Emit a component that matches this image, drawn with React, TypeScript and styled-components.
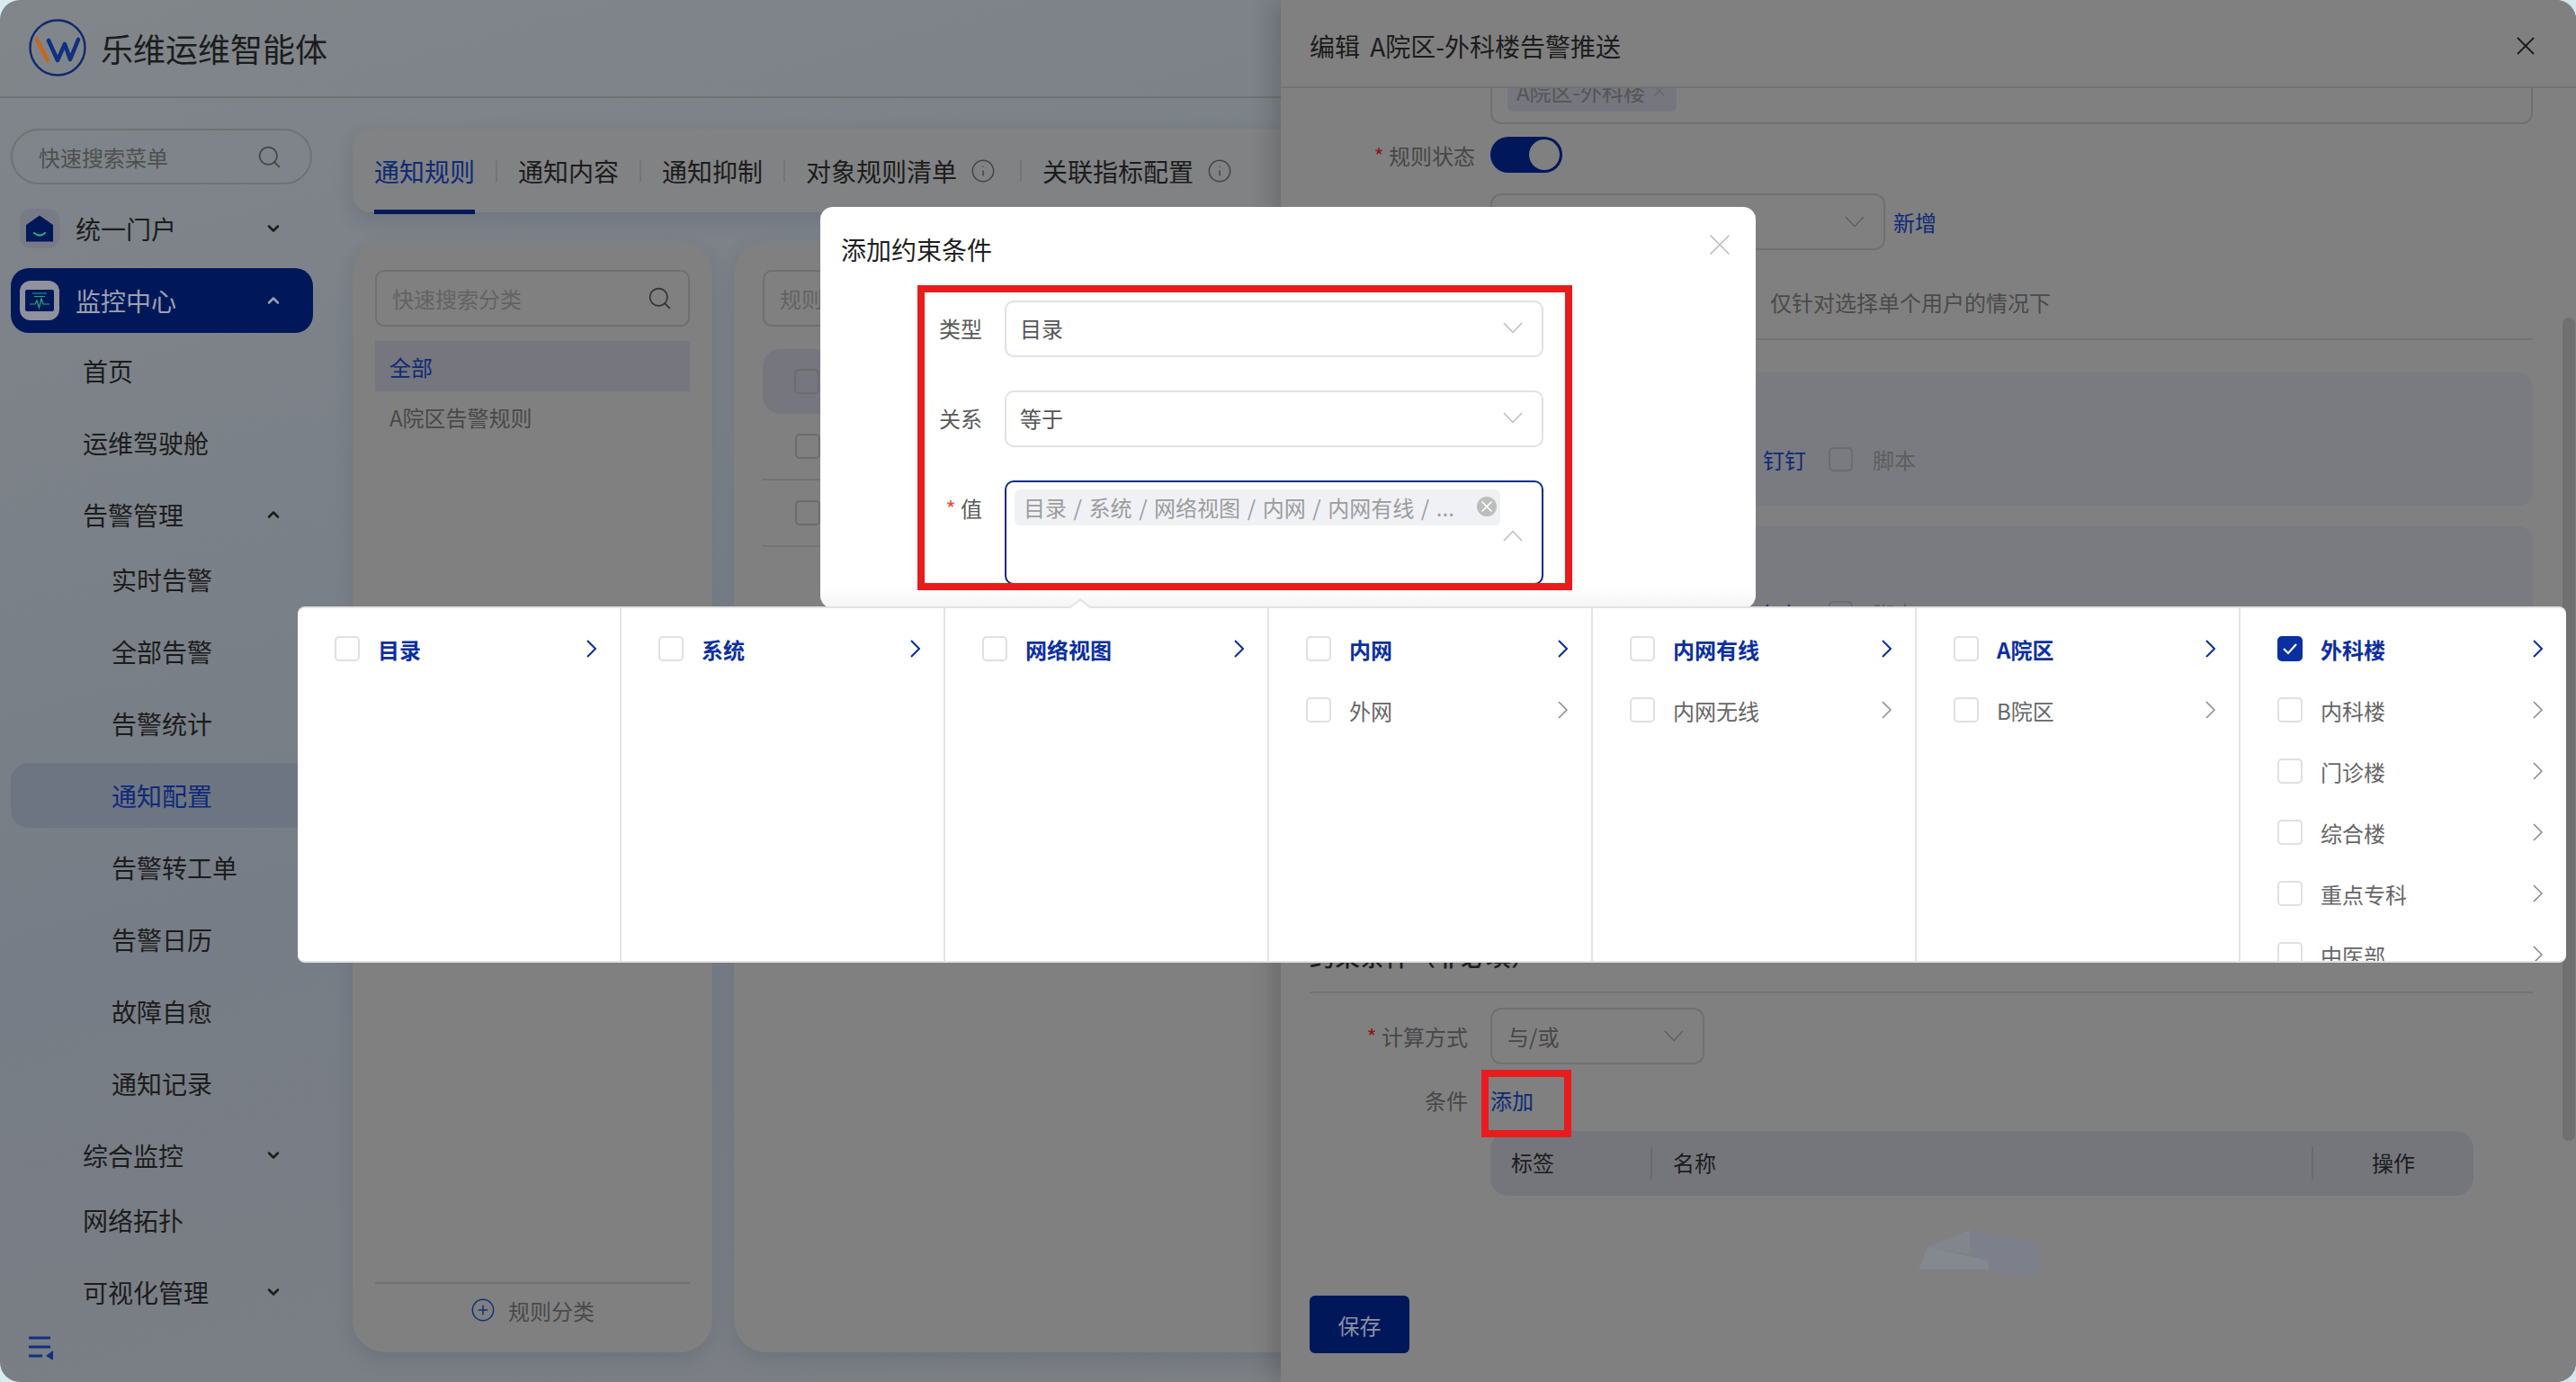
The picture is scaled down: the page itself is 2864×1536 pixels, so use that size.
import React from 'react';
import styled, { createGlobalStyle } from 'styled-components';
import { Search, Info, CirclePlus, X, ChevronDown, ChevronUp } from 'lucide-react';

const GlobalStyle = createGlobalStyle`
  html, body {
    margin: 0;
    padding: 0;
    background: #d9edf0;
  }
  * {
    box-sizing: border-box;
  }
  body {
    font-family: "Noto Sans CJK SC", "Noto Sans", sans-serif;
  }
`;

const Stage = styled.div`
  position: relative;
  width: 2864px;
  height: 1536px;
  overflow: hidden;
  background: #d9edf0;
`;

const Shell = styled.div`
  display: flex;
  flex-direction: column;
  height: 100%;
  border-radius: 22px;
  overflow: hidden;
  background: linear-gradient(165deg, #80868a 0%, #777d86 48%, #7e8083 100%);
`;

const TopBar = styled.header`
  display: flex;
  align-items: center;
  gap: 16px;
  flex: 0 0 109px;
  padding: 0 0 2px 32px;
  border-bottom: 2px solid #6f7375;
`;

const BrandName = styled.div`
  font-size: 36px;
  line-height: 50px;
  color: #1c1c1c;
`;

const Body = styled.div`
  display: flex;
  flex: 1;
  min-height: 0;
`;

const Sidebar = styled.aside`
  flex: 0 0 392px;
  padding: 34px 0 0 12px;
  position: relative;
`;

const MenuSearch = styled.div`
  display: flex;
  align-items: center;
  justify-content: space-between;
  width: 335px;
  height: 62px;
  margin-bottom: 13px;
  padding: 0 31px 0 29px;
  border: 2px solid #6f7376;
  border-radius: 31px;
  font-size: 24px;
  color: #4f4f4f;
`;

const NavRow = styled.div<{ $level: number; $active?: boolean; $selected?: boolean; $tight?: boolean }>`
  display: flex;
  align-items: center;
  width: 336px;
  height: 72px;
  margin-bottom: ${(p) => (p.$tight ? 0 : p.$active ? 6 : 8)}px;
  padding-left: ${(p) => [10, 80, 112][p.$level]}px;
  padding-right: 34px;
  border-radius: 20px;
  font-size: 28px;
  background: ${(p) => (p.$active ? '#00185a' : p.$selected ? '#6e7582' : 'transparent')};
  color: ${(p) => (p.$active ? '#9ca0ae' : p.$selected ? '#0e2a78' : '#1c1c1c')};
`;

const NavIcon = styled.span<{ $active?: boolean }>`
  display: flex;
  align-items: center;
  justify-content: center;
  flex: 0 0 44px;
  height: 44px;
  margin-right: 18px;
  border-radius: 12px;
  background: ${(p) => (p.$active ? '#8f919d' : '#787b85')};
`;

const NavCaret = styled.span`
  display: flex;
  margin-left: auto;
  color: #1c1c1c;
`;

const ActiveCaret = styled(NavCaret)`
  color: #9ca0ae;
`;

const CollapseToggle = styled.span`
  position: absolute;
  left: 31px;
  bottom: 25px;
  display: flex;
`;

const Main = styled.main`
  flex: 1;
  min-width: 0;
  padding-top: 34px;
`;

const TabsCard = styled.nav`
  display: flex;
  align-items: center;
  height: 93px;
  padding-left: 24px;
  margin-bottom: 32px;
  border-radius: 20px;
  background: #818283;
  box-shadow: 0 8px 20px rgba(60, 70, 90, 0.22);
`;

const Tab = styled.div<{ $active?: boolean }>`
  position: relative;
  display: flex;
  align-items: center;
  gap: 15px;
  height: 100%;
  font-size: 28px;
  color: ${(p) => (p.$active ? '#0e2a78' : '#1c1c1c')};

  svg {
    margin-right: 4px;
  }

  &::after {
    content: '';
    position: absolute;
    left: 0;
    right: 0;
    bottom: -2px;
    height: 5px;
    background: ${(p) => (p.$active ? '#00185a' : 'transparent')};
  }
`;

const TabSep = styled.span`
  width: 2px;
  height: 24px;
  margin: 0 23px;
  background: #757575;
`;

const Columns = styled.div`
  display: flex;
  gap: 24px;
  height: 1235px;
`;

const CategoryCard = styled.section`
  display: flex;
  flex-direction: column;
  flex: 0 0 400px;
  padding: 32px 25px 0;
  border-radius: 36px;
  background: #808080;
  box-shadow: 0 8px 20px rgba(60, 70, 90, 0.2);
`;

const BoxSearch = styled.div`
  display: flex;
  align-items: center;
  justify-content: space-between;
  width: 100%;
  height: 63px;
  padding: 0 17px 0 17px;
  border: 2px solid #6f6f6f;
  border-radius: 10px;
  font-size: 24px;
  color: #636363;
`;

const CategoryItem = styled.div<{ $active?: boolean }>`
  display: flex;
  align-items: center;
  height: 56px;
  padding-left: 16px;
  font-size: 24px;
  background: ${(p) => (p.$active ? '#75767e' : 'transparent')};
  color: ${(p) => (p.$active ? '#0e2a78' : '#484848')};
`;

const CategoryList = styled.div`
  flex: 1;
  margin-top: 16px;
`;

const CategoryFooter = styled.div`
  display: flex;
  align-items: center;
  justify-content: center;
  gap: 14px;
  height: 78px;
  padding-bottom: 18px;
  border-top: 2px solid #707070;
  font-size: 24px;
  color: #4a4a4a;
`;

const RulesCard = styled.section`
  flex: 1;
  padding: 32px 32px 0;
  border-radius: 36px;
  background: #808080;
  box-shadow: 0 8px 20px rgba(60, 70, 90, 0.2);
`;

const RulesHead = styled.div`
  display: flex;
  align-items: center;
  height: 72px;
  margin-top: 25px;
  padding-left: 35px;
  border-radius: 20px;
  background: #75767e;
`;

const RulesRow = styled.div`
  display: flex;
  align-items: center;
  height: 74px;
  padding-left: 36px;
  border-bottom: 2px solid #737373;
`;

const DimBox = styled.span`
  display: block;
  width: 28px;
  height: 28px;
  border: 2px solid #6c6c6c;
  border-radius: 5px;
`;

const Drawer = styled.aside`
  position: absolute;
  top: 0;
  right: 0;
  display: flex;
  flex-direction: column;
  width: 1440px;
  height: 100%;
  border-radius: 0 22px 22px 0;
  background: #808080;
  box-shadow: -10px 0 22px rgba(40, 40, 40, 0.22);
`;

const DrawerHead = styled.div`
  display: flex;
  align-items: center;
  justify-content: space-between;
  flex: 0 0 98px;
  padding: 8px 39px 2px 32px;
  border-bottom: 2px solid #737373;
  font-size: 28px;
  word-spacing: 5px;
  color: #1c1c1c;
`;

const DrawerBody = styled.div`
  flex: 1;
  min-height: 0;
  overflow: hidden;
  padding: 0 48px 0 32px;
`;

const DrawerFoot = styled.div`
  flex: 0 0 120px;
  padding: 24px 0 0 32px;
`;

const SaveButton = styled.div`
  display: flex;
  align-items: center;
  justify-content: center;
  width: 111px;
  height: 64px;
  border-radius: 6px;
  background: #00185a;
  font-size: 24px;
  color: #8b90a6;
`;

const TagBox = styled.div`
  display: flex;
  align-items: flex-end;
  height: 80px;
  margin: -40px 0 14px 201px;
  padding: 0 0 12px 17px;
  border: 2px solid #707070;
  border-radius: 12px;
`;

const DimTag = styled.span`
  display: flex;
  align-items: center;
  gap: 6px;
  height: 46px;
  padding: 0 9px 0 10px;
  border-radius: 6px;
  background: #75767e;
  font-size: 24px;
  color: #555;
`;

const FieldRow = styled.div<{ $gap?: number }>`
  display: flex;
  align-items: center;
  margin-bottom: ${(p) => p.$gap ?? 0}px;
  font-size: 24px;
`;

const DrawerLabel = styled.div<{ $width: number; $required?: boolean }>`
  flex: 0 0 ${(p) => p.$width}px;
  margin-right: ${(p) => 201 - p.$width}px;
  text-align: right;
  color: #474747;

  &::before {
    content: ${(p) => (p.$required ? "'* '" : "''")};
    color: #8a1818;
  }
`;

const Toggle = styled.span`
  display: flex;
  align-items: center;
  justify-content: flex-end;
  width: 80px;
  height: 40px;
  padding-right: 3px;
  border-radius: 20px;
  background: #00185a;
`;

const ToggleKnob = styled.span`
  width: 34px;
  height: 34px;
  border-radius: 50%;
  background: #808080;
`;

const DimSelect = styled.div<{ $width: number }>`
  display: flex;
  align-items: center;
  justify-content: space-between;
  width: ${(p) => p.$width}px;
  height: 63px;
  padding: 0 21px 0 17px;
  border: 2px solid #707070;
  border-radius: 12px;
  color: #474747;
`;

const InlineLink = styled.span`
  margin-left: 9px;
  color: #0e2a78;
`;

const AddLink = styled.span`
  color: #0e2a78;
`;

const Note = styled.div`
  height: 34px;
  margin: 41px 0 23px 512px;
  font-size: 24px;
  line-height: 34px;
  color: #4a4a4a;
`;

const Rule = styled.div`
  height: 2px;
  background: #737373;
`;

const NoteRule = styled(Rule)`
  margin-bottom: 36px;
`;

const ChannelBlock = styled.div`
  display: flex;
  align-items: center;
  height: 148px;
  margin: 0 0 23px 201px;
  padding: 44px 0 0 303px;
  border-radius: 16px;
  background: #7a7b80;
  font-size: 24px;
`;

const ChannelOn = styled.span`
  margin-right: 25px;
  color: #0e2a78;
`;

const ChannelOff = styled.span`
  margin-left: 22px;
  color: #5e5e5e;
`;

const ChannelBox = styled(DimBox)`
  width: 27px;
  height: 27px;
`;

const SectionTitle = styled.div`
  height: 40px;
  margin-top: 309px;
  font-size: 28px;
  font-weight: 500;
  line-height: 40px;
  color: #1c1c1c;
`;

const SectionRule = styled(Rule)`
  margin: 20px 0 16px;
`;

const CondTable = styled.div`
  display: flex;
  align-items: center;
  width: 1093px;
  height: 72px;
  margin: 17px 0 0 201px;
  border-radius: 20px;
  background: #75767c;
  font-size: 24px;
  color: #1c1c1c;
`;

const CondCell = styled.div<{ $width?: number; $center?: boolean }>`
  flex: ${(p) => (p.$width ? `0 0 ${p.$width}px` : 1)};
  height: 36px;
  padding-left: ${(p) => (p.$center ? 0 : 23)}px;
  line-height: 34px;
  text-align: ${(p) => (p.$center ? 'center' : 'left')};
  border-left: 2px solid #696a70;

  &:first-child {
    border-left: 0;
  }
`;

const EmptyArt = styled.svg`
  display: block;
  margin: 22px 0 0 654px;
`;

const Scrollbar = styled.div`
  position: absolute;
  top: 353px;
  right: 1px;
  width: 14px;
  height: 915px;
  border-radius: 7px;
  background: #707070;
`;

const Modal = styled.section`
  position: absolute;
  left: 912px;
  top: 230px;
  width: 1040px;
  height: 446px;
  border-radius: 14px;
  background: linear-gradient(180deg, #fff 95%, #f3f3f3 100%);
`;

const ModalTitle = styled.h2`
  margin: 0;
  padding: 27px 0 0 23px;
  height: 104px;
  font-size: 28px;
  font-weight: 400;
  line-height: 40px;
  color: #1f1f1f;
`;

const ModalClose = styled.span`
  position: absolute;
  top: 22px;
  right: 20px;
  display: flex;
  color: #bdbdbd;
`;

const ModalForm = styled.div`
  display: flex;
  flex-direction: column;
  gap: 37px;
  padding-left: 80px;
`;

const ModalRow = styled.div`
  display: flex;
  align-items: flex-start;
  gap: 25px;
  font-size: 24px;
`;

const ModalLabel = styled.div<{ $required?: boolean }>`
  flex: 0 0 100px;
  margin-top: 13px;
  text-align: right;
  line-height: 36px;
  color: #5a5a5a;

  &::before {
    content: ${(p) => (p.$required ? "'* '" : "''")};
    color: #f5483b;
  }
`;

const Select = styled.div`
  display: flex;
  align-items: center;
  justify-content: space-between;
  width: 599px;
  height: 63px;
  padding: 0 21px 2px 15px;
  border: 2px solid #e2e2e2;
  border-radius: 10px;
  color: #555;
`;

const MultiSelect = styled.div`
  position: relative;
  width: 599px;
  height: 116px;
  padding: 8px 0 0 9px;
  border: 2px solid #0a2c84;
  border-radius: 10px;
`;

const MultiCaret = styled.span`
  position: absolute;
  top: 53px;
  right: 21px;
  display: flex;
`;

const ValueTag = styled.div`
  display: flex;
  align-items: center;
  justify-content: space-between;
  width: 540px;
  height: 40px;
  padding: 0 4px 2px 10px;
  border-radius: 6px;
  background: #f0f1f5;
  font-size: 24px;
  word-spacing: 2.2px;
  color: #9c9c9c;
  white-space: pre;
`;

const TagClear = styled.span`
  display: flex;
  align-items: center;
  justify-content: center;
  width: 22px;
  height: 22px;
  border-radius: 50%;
  background: #bdbdbd;
  color: #fff;
`;

const Cascader = styled.div`
  position: absolute;
  left: 331px;
  top: 674px;
  display: flex;
  width: 2522px;
  height: 396px;
  border-top: 2px solid #e2e2e2;
  border-bottom: 2px solid #e2e2e2;
  border-radius: 8px;
  background: #fff;

  &::before {
    content: '';
    position: absolute;
    left: 862px;
    top: -9px;
    width: 14px;
    height: 14px;
    background: #fff;
    border-top: 2px solid #e2e2e2;
    border-left: 2px solid #e2e2e2;
    transform: rotate(45deg) skew(-6deg, -6deg);
  }
`;

const CascadeColumn = styled.div`
  flex: 0 0 360px;
  padding-top: 11px;
  overflow: hidden;
  border-right: 2px solid #e4e4e4;

  &:last-child {
    flex-basis: 362px;
    border-right: 0;
  }
`;

const CascadeOption = styled.div<{ $on?: boolean }>`
  display: flex;
  align-items: center;
  height: 68px;
  padding: 0 26px 0 41px;
  font-size: 24px;
  font-weight: ${(p) => (p.$on ? 700 : 400)};
  color: ${(p) => (p.$on ? '#0b2f9f' : '#666')};
`;

const CheckBox = styled.span<{ $checked?: boolean }>`
  display: flex;
  align-items: center;
  justify-content: center;
  flex: 0 0 28px;
  height: 28px;
  margin-right: 20px;
  border: 2px solid ${(p) => (p.$checked ? '#0a2fa0' : '#e0e0e0')};
  border-radius: 5px;
  background: ${(p) => (p.$checked ? '#0a2fa0' : '#fff')};
`;

const OptionArrow = styled.svg`
  margin-left: auto;
  flex: none;
`;

const Callout = styled.div<{ $left: number; $top: number; $width: number; $height: number }>`
  position: absolute;
  left: ${(p) => p.$left}px;
  top: ${(p) => p.$top}px;
  width: ${(p) => p.$width}px;
  height: ${(p) => p.$height}px;
  border: 8px solid #e81c1c;
`;

const LogoMark = () => (
  <svg width="64" height="64" viewBox="0 0 64 64" fill="none">
    <circle cx="32" cy="32" r="30.5" stroke="#10296e" strokeWidth="2.4" />
    <path d="M9 23 L21 46" stroke="#c4671f" strokeWidth="4.6" strokeLinecap="round" />
    <path d="M22 24 L32 46 L40 28 L46 45 L55 23" stroke="#10317f" strokeWidth="4.6" strokeLinejoin="round" strokeLinecap="round" />
  </svg>
);

const PortalGlyph = () => (
  <svg width="30" height="30" viewBox="0 0 30 30">
    <path d="M15 0.5 L30 11 V29.5 H0 V11 Z" fill="#00185a" />
    <path d="M9 20 Q15 25 21 20" fill="none" stroke="#27a878" strokeWidth="2.2" strokeLinecap="round" />
  </svg>
);

const MonitorGlyph = () => (
  <svg width="32" height="24" viewBox="0 0 32 24">
    <rect width="32" height="24" rx="2" fill="#00185a" />
    <path d="M8 4 H24 M10 7.5 H22" stroke="#27a878" strokeWidth="1.2" />
    <path d="M5 16 H11 L13 12 L15.5 20 L18 10 L20 16 H27" fill="none" stroke="#27a878" strokeWidth="1.2" />
  </svg>
);

const CollapseGlyph = () => (
  <svg width="30" height="26" viewBox="0 0 30 26">
    <path d="M1 2 H25 M1 12 H25 M1 22 H16" stroke="#10317f" strokeWidth="3" />
    <path d="M28 16 V27 L20 22 Z" fill="#10317f" />
  </svg>
);

const FieldCaret = ({ up, color = '#bdbdbd' }: { up?: boolean; color?: string }) => (
  <svg width="22" height="13" viewBox="0 0 22 13" fill="none">
    <path d={up ? 'M1 12 L11 1.5 L21 12' : 'M1 1 L11 11.5 L21 1'} stroke={color} strokeWidth="1.5" />
  </svg>
);

const cascadeColumns = [
  [{ name: '目录', on: true }],
  [{ name: '系统', on: true }],
  [{ name: '网络视图', on: true }],
  [{ name: '内网', on: true }, { name: '外网' }],
  [{ name: '内网有线', on: true }, { name: '内网无线' }],
  [{ name: 'A院区', on: true }, { name: 'B院区' }],
  [
    { name: '外科楼', on: true, checked: true },
    { name: '内科楼' },
    { name: '门诊楼' },
    { name: '综合楼' },
    { name: '重点专科' },
    { name: '中医部' },
  ],
];

type NavItem = {
  name: string;
  level: number;
  caret?: 'up' | 'down';
  tight?: boolean;
  selected?: boolean;
};

const navItems: NavItem[] = [
  { name: '首页', level: 1 },
  { name: '运维驾驶舱', level: 1 },
  { name: '告警管理', level: 1, caret: 'up', tight: true },
  { name: '实时告警', level: 2 },
  { name: '全部告警', level: 2 },
  { name: '告警统计', level: 2 },
  { name: '通知配置', level: 2, selected: true },
  { name: '告警转工单', level: 2 },
  { name: '告警日历', level: 2 },
  { name: '故障自愈', level: 2 },
  { name: '通知记录', level: 2 },
  { name: '综合监控', level: 1, caret: 'down', tight: true },
  { name: '网络拓扑', level: 1 },
  { name: '可视化管理', level: 1, caret: 'down' },
];

const App: React.FC = () => {
  return (
    <Stage>
      <GlobalStyle />
      <Shell>
        <TopBar>
          <LogoMark />
          <BrandName>乐维运维智能体</BrandName>
        </TopBar>
        <Body>
          <Sidebar>
            <MenuSearch>
              快速搜索菜单
              <Search size={29} strokeWidth={1.4} color="#444" />
            </MenuSearch>
            <NavRow $level={0}>
              <NavIcon><PortalGlyph /></NavIcon>
              统一门户
              <NavCaret><ChevronDown size={20} strokeWidth={3} /></NavCaret>
            </NavRow>
            <NavRow $level={0} $active>
              <NavIcon $active><MonitorGlyph /></NavIcon>
              监控中心
              <ActiveCaret><ChevronUp size={20} strokeWidth={3} /></ActiveCaret>
            </NavRow>
            {navItems.map((item) => (
              <NavRow key={item.name} $level={item.level} $tight={item.tight} $selected={item.selected}>
                {item.name}
                {item.caret && (
                  <NavCaret>
                    {item.caret === 'up' ? <ChevronUp size={20} strokeWidth={3} /> : <ChevronDown size={20} strokeWidth={3} />}
                  </NavCaret>
                )}
              </NavRow>
            ))}
            <CollapseToggle><CollapseGlyph /></CollapseToggle>
          </Sidebar>
          <Main>
            <TabsCard>
              <Tab $active>通知规则</Tab>
              <TabSep />
              <Tab>通知内容</Tab>
              <TabSep />
              <Tab>通知抑制</Tab>
              <TabSep />
              <Tab>对象规则清单<Info size={28} strokeWidth={1.3} color="#444" /></Tab>
              <TabSep />
              <Tab>关联指标配置<Info size={28} strokeWidth={1.3} color="#444" /></Tab>
            </TabsCard>
            <Columns>
              <CategoryCard>
                <BoxSearch>
                  快速搜索分类
                  <Search size={29} strokeWidth={1.4} color="#333" />
                </BoxSearch>
                <CategoryList>
                  <CategoryItem $active>全部</CategoryItem>
                  <CategoryItem>A院区告警规则</CategoryItem>
                </CategoryList>
                <CategoryFooter>
                  <CirclePlus size={28} strokeWidth={1.3} color="#10317f" />
                  规则分类
                </CategoryFooter>
              </CategoryCard>
              <RulesCard>
                <BoxSearch>规则名称</BoxSearch>
                <RulesHead><DimBox /></RulesHead>
                <RulesRow><DimBox /></RulesRow>
                <RulesRow><DimBox /></RulesRow>
              </RulesCard>
            </Columns>
          </Main>
        </Body>
      </Shell>

      <Drawer>
        <DrawerHead>
          编辑 A院区-外科楼告警推送
          <X size={34} strokeWidth={1.3} color="#1c1c1c" />
        </DrawerHead>
        <DrawerBody>
          <TagBox>
            <DimTag>A院区-外科楼<X size={20} strokeWidth={1.3} color="#666" /></DimTag>
          </TagBox>
          <FieldRow $gap={23}>
            <DrawerLabel $width={184} $required>规则状态</DrawerLabel>
            <Toggle><ToggleKnob /></Toggle>
          </FieldRow>
          <FieldRow>
            <DrawerLabel $width={184} />
            <DimSelect $width={439}><span />
              <FieldCaret color="#5f5f5f" />
            </DimSelect>
            <InlineLink>新增</InlineLink>
          </FieldRow>
          <Note>仅针对选择单个用户的情况下</Note>
          <NoteRule />
          <ChannelBlock>
            <ChannelOn>钉钉</ChannelOn>
            <ChannelBox />
            <ChannelOff>脚本</ChannelOff>
          </ChannelBlock>
          <ChannelBlock>
            <ChannelOn>钉钉</ChannelOn>
            <ChannelBox />
            <ChannelOff>脚本</ChannelOff>
          </ChannelBlock>
          <SectionTitle>约束条件（非必填）</SectionTitle>
          <SectionRule />
          <FieldRow $gap={22}>
            <DrawerLabel $width={176} $required>计算方式</DrawerLabel>
            <DimSelect $width={238}>
              与/或
              <FieldCaret color="#5f5f5f" />
            </DimSelect>
          </FieldRow>
          <FieldRow>
            <DrawerLabel $width={176}>条件</DrawerLabel>
            <AddLink>添加</AddLink>
          </FieldRow>
          <CondTable>
            <CondCell $width={178}>标签</CondCell>
            <CondCell>名称</CondCell>
            <CondCell $width={180} $center>操作</CondCell>
          </CondTable>
          <EmptyArt width="250" height="80" viewBox="0 0 250 80">
            <path d="M33 35 L100 50 L103 60 L23 60 L16 80 Z" fill="#84888f" />
            <path d="M33 35 L80 16 L80 43 Z" fill="#82868c" />
            <path d="M80 16 L153 30 L160 52 L147 80 L103 80 L100 50 L80 43 Z" fill="#7d808a" />
            <ellipse cx="217" cy="60" rx="3" ry="1.5" fill="#7c808c" />
          </EmptyArt>
        </DrawerBody>
        <DrawerFoot>
          <SaveButton>保存</SaveButton>
        </DrawerFoot>
        <Scrollbar />
      </Drawer>

      <Modal>
        <ModalTitle>添加约束条件</ModalTitle>
        <ModalClose><X size={40} strokeWidth={1} /></ModalClose>
        <ModalForm>
          <ModalRow>
            <ModalLabel>类型</ModalLabel>
            <Select>目录<FieldCaret /></Select>
          </ModalRow>
          <ModalRow>
            <ModalLabel>关系</ModalLabel>
            <Select>等于<FieldCaret /></Select>
          </ModalRow>
          <ModalRow>
            <ModalLabel $required>值</ModalLabel>
            <MultiSelect>
              <ValueTag>
                目录 / 系统 / 网络视图 / 内网 / 内网有线 / ...
                <TagClear><X size={20} strokeWidth={2} /></TagClear>
              </ValueTag>
              <MultiCaret><FieldCaret up /></MultiCaret>
            </MultiSelect>
          </ModalRow>
        </ModalForm>
      </Modal>

      <Cascader>
        {cascadeColumns.map((col, i) => (
          <CascadeColumn key={i}>
            {col.map((opt) => (
              <CascadeOption key={opt.name} $on={opt.on}>
                <CheckBox $checked={opt.checked}>
                  {opt.checked && (
                    <svg width="18" height="14" viewBox="0 0 18 14" fill="none">
                      <path d="M2 7 L7 12 L16 2" stroke="#fff" strokeWidth="2.2" />
                    </svg>
                  )}
                </CheckBox>
                {opt.name}
                <OptionArrow width="11" height="20" viewBox="0 0 11 20" fill="none">
                  <path d="M1 1 L10 10 L1 19" stroke={opt.on ? '#0b2f9f' : '#888'} strokeWidth={opt.on ? 2 : 1.5} />
                </OptionArrow>
              </CascadeOption>
            ))}
          </CascadeColumn>
        ))}
      </Cascader>

      <Callout $left={1020} $top={317} $width={728} $height={339} />
      <Callout $left={1647} $top={1189} $width={100} $height={75} />
    </Stage>
  );
};

export default App;
